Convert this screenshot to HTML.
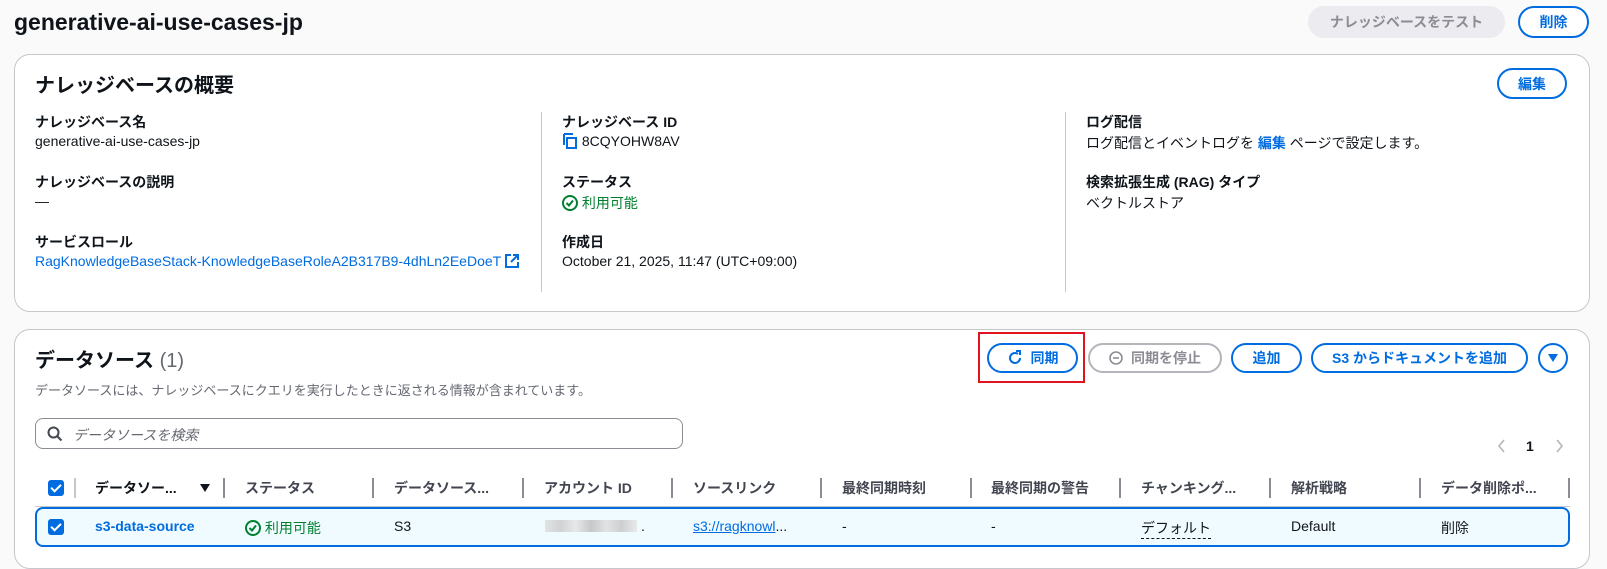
<!DOCTYPE html>
<html><head><meta charset="utf-8"><style>
*{box-sizing:border-box;margin:0;padding:0}
body{width:1607px;height:561px;overflow:hidden;background:#fafafa;font-family:"Liberation Sans","Noto Sans CJK JP",sans-serif;color:#0f141a;font-size:14px;position:relative}
.a{position:absolute;white-space:nowrap}
.card{position:absolute;background:#fff;border:1px solid #c6c6cd;border-radius:16px}
.btn{position:absolute;border:2px solid #006ce0;border-radius:20px;color:#006ce0;font-weight:bold;font-size:14px;display:flex;align-items:center;justify-content:center;background:#fff}
.lb{font-weight:bold}
.lnk{color:#006ce0}
.div{position:absolute;width:1px;background:#c6c6cd}
.hd{position:absolute;top:478px;font-weight:bold;color:#424650;white-space:nowrap;font-size:14px}
.hs{position:absolute;top:478px;width:2px;height:20px;background:#8c8c94}
.cb{position:absolute;width:16px;height:16px;background:#006ce0;border-radius:3px}
.cb:after{content:"";position:absolute;left:5px;top:2px;width:4px;height:8px;border:solid #fff;border-width:0 2px 2px 0;transform:rotate(45deg)}
.rc{position:absolute;top:518px;white-space:nowrap}
</style></head><body>
<div class="a" style="left:14px;top:9px;font-size:23px;font-weight:bold">generative-ai-use-cases-jp</div>
<div class="btn" style="left:1308px;top:6px;width:197px;height:32px;background:#ebebf0;border-color:#ebebf0;color:#8c8c94">ナレッジベースをテスト</div>
<div class="btn" style="left:1518px;top:6px;width:71px;height:32px">削除</div>

<div class="card" style="left:14px;top:54px;width:1576px;height:258px"></div>
<div class="a" style="left:35px;top:69px;font-size:20px;font-weight:bold">ナレッジベースの概要</div>
<div class="btn" style="left:1497px;top:68px;width:70px;height:31px">編集</div>
<div class="div" style="left:541px;top:112px;height:180px"></div>
<div class="div" style="left:1065px;top:112px;height:180px"></div>
<div class="a lb" style="left:35px;top:112px">ナレッジベース名</div>
<div class="a" style="left:35px;top:133px">generative-ai-use-cases-jp</div>
<div class="a lb" style="left:35px;top:172px">ナレッジベースの説明</div>
<div class="a" style="left:35px;top:193px">—</div>
<div class="a lb" style="left:35px;top:232px">サービスロール</div>
<div class="a lnk" style="left:35px;top:253px">RagKnowledgeBaseStack-KnowledgeBaseRoleA2B317B9-4dhLn2EeDoeT <svg width="14" height="14" viewBox="0 0 14 14" style="vertical-align:-2px"><path d="M6 1H1v12h12V8M8 1h5v5M13 1L6 8" fill="none" stroke="#006ce0" stroke-width="2"/></svg></div>
<div class="a lb" style="left:562px;top:112px">ナレッジベース ID</div>
<div class="a" style="left:562px;top:133px"><svg width="16" height="16" viewBox="0 0 16 16" style="vertical-align:-3px"><path d="M2 1v11M2 1h9" stroke="#006ce0" stroke-width="2" fill="none"/><rect x="5" y="5" width="9" height="10" fill="none" stroke="#006ce0" stroke-width="2"/></svg> 8CQYOHW8AV</div>
<div class="a lb" style="left:562px;top:172px">ステータス</div>
<div class="a" style="left:562px;top:193px;color:#00802f"><svg width="16" height="16" viewBox="0 0 16 16" style="vertical-align:-3px"><circle cx="8" cy="8" r="7" fill="none" stroke="#00802f" stroke-width="2"/><path d="M4.5 8l2.5 2.5 4-5" fill="none" stroke="#00802f" stroke-width="2"/></svg> 利用可能</div>
<div class="a lb" style="left:562px;top:232px">作成日</div>
<div class="a" style="left:562px;top:253px">October 21, 2025, 11:47 (UTC+09:00)</div>
<div class="a lb" style="left:1086px;top:112px">ログ配信</div>
<div class="a" style="left:1086px;top:133px">ログ配信とイベントログを <span class="lnk lb">編集</span> ページで設定します。</div>
<div class="a lb" style="left:1086px;top:172px">検索拡張生成 (RAG) タイプ</div>
<div class="a" style="left:1086px;top:193px">ベクトルストア</div>

<div class="card" style="left:14px;top:329px;width:1576px;height:240px"></div>
<div class="a" style="left:35px;top:344px;font-size:20px;font-weight:bold">データソース <span style="font-weight:normal;color:#656871">(1)</span></div>
<div class="a" style="left:35px;top:380px;font-size:13px;color:#656871">データソースには、ナレッジベースにクエリを実行したときに返される情報が含まれています。</div>
<div class="a" style="left:978px;top:332px;width:107px;height:51px;border:2px solid #e0141e"></div>
<div class="btn" style="left:987px;top:343px;width:91px;height:30px"><svg width="16" height="16" viewBox="0 0 16 16" style="margin-right:8px"><path d="M13 8a5 5 0 1 1-2-4" fill="none" stroke="#006ce0" stroke-width="2"/><path d="M9 1h4v4" fill="none" stroke="#006ce0" stroke-width="2"/></svg>同期</div>
<div class="btn" style="left:1088px;top:343px;width:134px;height:30px;border-color:#b4b4bb;color:#8c8c94"><svg width="14" height="14" viewBox="0 0 14 14" style="margin-right:8px"><circle cx="7" cy="7" r="6" fill="none" stroke="#8c8c94" stroke-width="1.6"/><path d="M4 7h6" stroke="#8c8c94" stroke-width="1.6"/></svg>同期を停止</div>
<div class="btn" style="left:1231px;top:343px;width:71px;height:30px">追加</div>
<div class="btn" style="left:1311px;top:343px;width:217px;height:30px">S3 からドキュメントを追加</div>
<div class="btn" style="left:1538px;top:343px;width:30px;height:30px"><svg width="12" height="10" viewBox="0 0 12 10"><path d="M1 1h10L6 9z" fill="#006ce0"/></svg></div>

<div class="a" style="left:35px;top:418px;width:648px;height:31px;border:1px solid #8c8c94;border-radius:8px;background:#fff"></div>
<svg class="a" style="left:47px;top:426px" width="16" height="16" viewBox="0 0 16 16"><circle cx="6.5" cy="6.5" r="5" fill="none" stroke="#424650" stroke-width="2"/><path d="M10 10l4.5 4.5" stroke="#424650" stroke-width="2"/></svg>
<div class="a" style="left:73px;top:425px;font-style:italic;color:#656871">データソースを検索</div>
<svg class="a" style="left:1497px;top:439px" width="10" height="14" viewBox="0 0 10 14"><path d="M7 1L2 7l5 6" fill="none" stroke="#b4b4bb" stroke-width="1.6"/></svg>
<div class="a" style="left:1526px;top:438px;font-weight:bold">1</div>
<svg class="a" style="left:1554px;top:439px" width="10" height="14" viewBox="0 0 10 14"><path d="M3 1l5 6-5 6" fill="none" stroke="#b4b4bb" stroke-width="1.6"/></svg>

<div class="cb" style="left:48px;top:480px"></div>
<div class="hs" style="left:74px;background:#c6c6cd"></div>
<div class="hd" style="left:95px;color:#0f141a">データソー...</div>
<svg class="a" style="left:199px;top:483px" width="12" height="10" viewBox="0 0 12 10"><path d="M1 1h10L6 9z" fill="#0f141a"/></svg>
<div class="hs" style="left:223px"></div><div class="hd" style="left:245px">ステータス</div>
<div class="hs" style="left:372px"></div><div class="hd" style="left:394px">データソース...</div>
<div class="hs" style="left:522px"></div><div class="hd" style="left:544px">アカウント ID</div>
<div class="hs" style="left:671px"></div><div class="hd" style="left:693px">ソースリンク</div>
<div class="hs" style="left:820px"></div><div class="hd" style="left:842px">最終同期時刻</div>
<div class="hs" style="left:970px"></div><div class="hd" style="left:991px">最終同期の警告</div>
<div class="hs" style="left:1119px"></div><div class="hd" style="left:1141px">チャンキング...</div>
<div class="hs" style="left:1269px"></div><div class="hd" style="left:1291px">解析戦略</div>
<div class="hs" style="left:1419px"></div><div class="hd" style="left:1441px">データ削除ポ...</div>
<div class="hs" style="left:1568px"></div>
<div class="a" style="left:35px;top:506px;width:1535px;height:1px;background:#c6c6cd"></div>

<div class="a" style="left:35px;top:507px;width:1535px;height:40px;background:#f0fbff;border:2px solid #006ce0;border-radius:8px"></div>
<div class="cb" style="left:48px;top:519px"></div>
<div class="rc lnk lb" style="left:95px">s3-data-source</div>
<div class="rc" style="left:245px;color:#00802f"><svg width="16" height="16" viewBox="0 0 16 16" style="vertical-align:-3px"><circle cx="8" cy="8" r="7" fill="none" stroke="#00802f" stroke-width="2"/><path d="M4.5 8l2.5 2.5 4-5" fill="none" stroke="#00802f" stroke-width="2"/></svg> 利用可能</div>
<div class="rc" style="left:394px">S3</div>
<div class="a" style="left:545px;top:520px;width:92px;height:12px;background:linear-gradient(90deg,#ddd,#c8c8c8,#e4e4e4,#bbb,#ddd,#c4c4c4,#e6e6e6);opacity:.8"></div>
<div class="rc" style="left:641px">.</div>
<div class="rc lnk" style="left:693px;color:#006ce0"><span style="text-decoration:underline">s3://ragknowl</span><span style="color:#0f141a">...</span></div>
<div class="rc" style="left:842px">-</div>
<div class="rc" style="left:991px">-</div>
<div class="rc" style="left:1141px;border-bottom:1px dashed #0f141a">デフォルト</div>
<div class="rc" style="left:1291px">Default</div>
<div class="rc" style="left:1441px">削除</div>
</body></html>
